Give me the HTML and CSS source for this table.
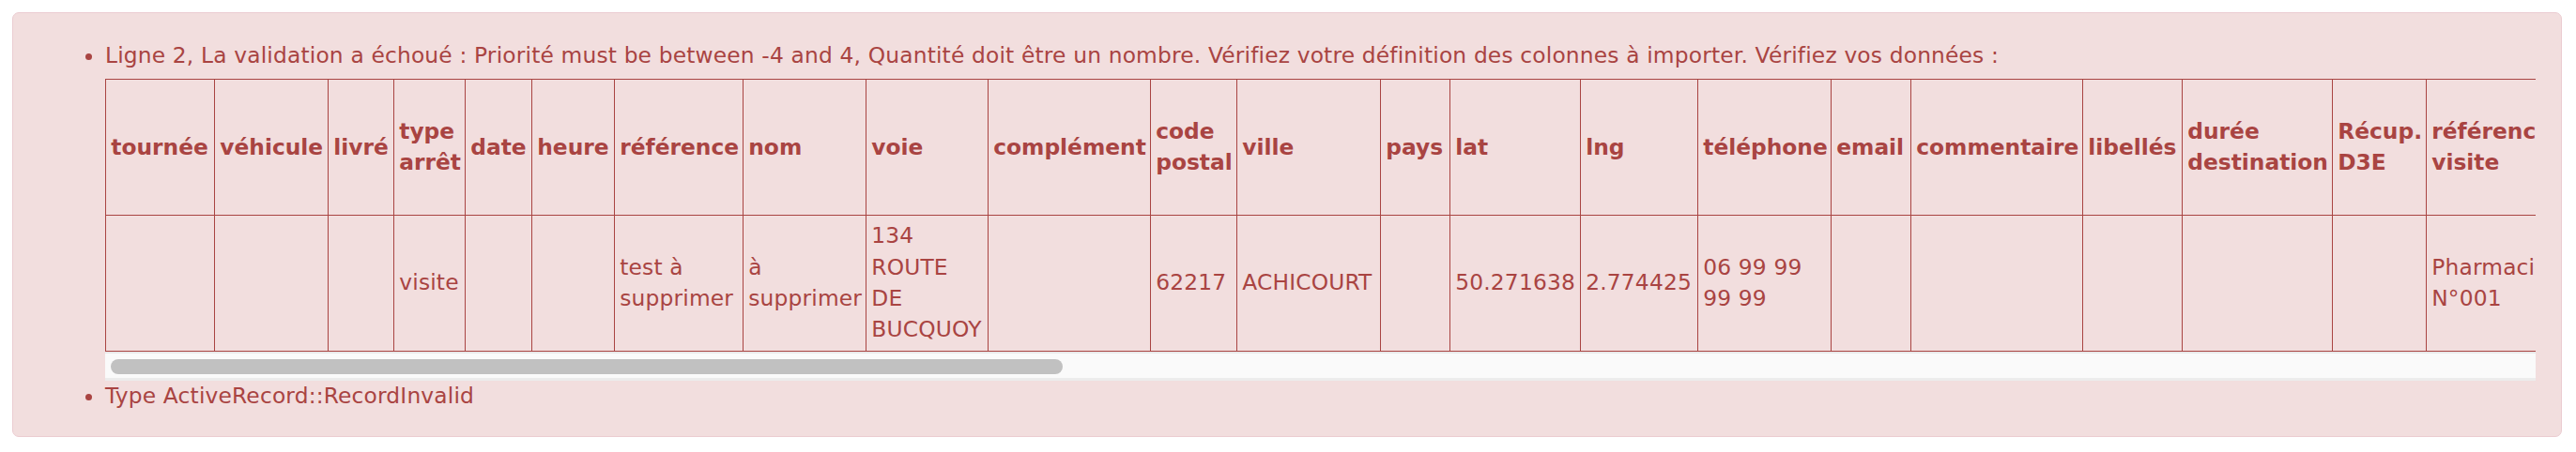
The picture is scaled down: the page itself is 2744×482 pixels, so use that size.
FILE: index.html
```html
<!DOCTYPE html>
<html lang="fr">
<head>
<meta charset="utf-8">
<title>Import</title>
<link rel="stylesheet" href="styles.css">
</head>
<body>
<div class="alert">
  <ul class="errors">
    <li>Ligne 2, La validation a échoué : Priorité must be between -4 and 4, Quantité doit être un nombre. Vérifiez votre définition des colonnes à importer. Vérifiez vos données :
      <div class="scroller">
        <table class="grid">
          <colgroup>
            <col class="w116"><col class="w121"><col class="w70"><col class="w76"><col class="w71"><col class="w88"><col class="w137"><col class="w131"><col class="w130"><col class="w173"><col class="w92"><col class="w153"><col class="w74"><col class="w139"><col class="w125"><col class="w142"><col class="w85"><col class="w183"><col class="w106"><col class="w160"><col class="w100"><col class="w139">
            <col class="w115"><col class="w125"><col class="w90"><col class="w110"><col class="w130"><col class="w130"><col class="w130"><col class="w130"><col class="w125"><col class="w175"><col class="w165"><col class="w115"><col class="w145"><col class="w100"><col class="w95"><col class="w150"><col class="w165"><col class="w120"><col class="w130"><col class="w135"><col class="w90"><col class="w85"><col class="w140"><col class="w80"><col class="w110"><col class="w80"><col class="w140"><col class="w140"><col class="w130"><col class="w100"><col class="w120"><col class="w122">
          </colgroup>
          <thead>
            <tr>
              <th>tournée</th><th>véhicule</th><th>livré</th><th>type arrêt</th><th>date</th><th>heure</th><th>référence</th><th>nom</th><th>voie</th><th>complément</th><th>code postal</th><th>ville</th><th>pays</th><th>lat</th><th>lng</th><th>téléphone</th><th>email</th><th>commentaire</th><th>libellés</th><th>durée destination</th><th>Récup. D3E</th><th>référence visite</th>
              <th>priorité</th><th>quantité</th><th>poids</th><th>volume</th><th>heure début créneau 1</th><th>heure fin créneau 1</th><th>heure début créneau 2</th><th>heure fin créneau 2</th><th>durée service</th><th>compétences</th><th>identifiant externe</th><th>contact</th><th>téléphone 2</th><th>mobile</th><th>code client</th><th>numéro commande</th><th>instructions</th><th>montant</th><th>paiement</th><th>signature</th><th>photo</th><th>suivi</th><th>référence produit</th><th>zone</th><th>secteur</th><th>tags</th><th>notes internes</th><th>date livraison</th><th>heure passage</th><th>statut</th><th>nombre colis</th><th>code barre</th>
            </tr>
          </thead>
          <tbody>
            <tr>
              <td></td><td></td><td></td><td>visite</td><td></td><td></td><td>test à supprimer</td><td>à supprimer</td><td>134 ROUTE DE BUCQUOY</td><td></td><td>62217</td><td>ACHICOURT</td><td></td><td>50.271638</td><td>2.774425</td><td>06 99 99 99 99</td><td></td><td></td><td></td><td></td><td></td><td>Pharmacie N°001</td>
              <td>5</td><td>deux</td><td></td><td></td><td></td><td></td><td></td><td></td><td></td><td></td><td></td><td></td><td></td><td></td><td></td><td></td><td></td><td></td><td></td><td></td><td></td><td></td><td></td><td></td><td></td><td></td><td></td><td></td><td></td><td></td><td></td><td></td>
            </tr>
          </tbody>
        </table>
      </div>
      <div class="hscroll"><div class="hscroll-thumb"></div></div>
    </li>
    <li>Type ActiveRecord::RecordInvalid</li>
  </ul>
</div>
</body>
</html>
```
FILE: styles.css
```css
html, body {
  background: #ffffff;
}
body {
  margin: 13px 15px 13px 13px;
  font-family: "DejaVu Sans", Verdana, sans-serif;
  font-size: 23.33px;
  line-height: 33.33px;
  letter-spacing: 0.17px;
  color: #a94442;
}
.alert {
  background: #f2dede;
  border: 1px solid #ebccd1;
  border-radius: 7px;
  padding: 29px 27px 26px 28px;
}
.errors {
  margin: 0;
  padding-left: 70px;
}
.scroller {
  margin-top: 8px;
  overflow: hidden;
}
.hscroll {
  box-sizing: border-box;
  height: 31px;
  padding: 8px 0 0 6px;
  background: linear-gradient(#e9e9e9 0 2px, #fafafa 2px 28px, #ececec 28px);
}
.hscroll-thumb {
  width: 1014px;
  height: 16px;
  border-radius: 8px;
  background: #c1c1c1;
}
.grid {
  table-layout: fixed;
  width: 6528px;
  border-collapse: collapse;
  border: 1px solid #a94442;
}
.grid th,
.grid td {
  border: 1px solid #a94442;
  padding: 5.25px;
  text-align: left;
  vertical-align: middle;
}
.grid th {
  font-weight: bold;
  letter-spacing: 0;
}
.w70 { width: 70px; }
.w71 { width: 71px; }
.w74 { width: 74px; }
.w76 { width: 76px; }
.w80 { width: 80px; }
.w85 { width: 85px; }
.w88 { width: 88px; }
.w90 { width: 90px; }
.w92 { width: 92px; }
.w95 { width: 95px; }
.w100 { width: 100px; }
.w106 { width: 106px; }
.w110 { width: 110px; }
.w115 { width: 115px; }
.w116 { width: 116px; }
.w120 { width: 120px; }
.w121 { width: 121px; }
.w122 { width: 122px; }
.w125 { width: 125px; }
.w130 { width: 130px; }
.w131 { width: 131px; }
.w135 { width: 135px; }
.w137 { width: 137px; }
.w139 { width: 139px; }
.w140 { width: 140px; }
.w142 { width: 142px; }
.w145 { width: 145px; }
.w150 { width: 150px; }
.w153 { width: 153px; }
.w160 { width: 160px; }
.w165 { width: 165px; }
.w173 { width: 173px; }
.w175 { width: 175px; }
.w183 { width: 183px; }
```
